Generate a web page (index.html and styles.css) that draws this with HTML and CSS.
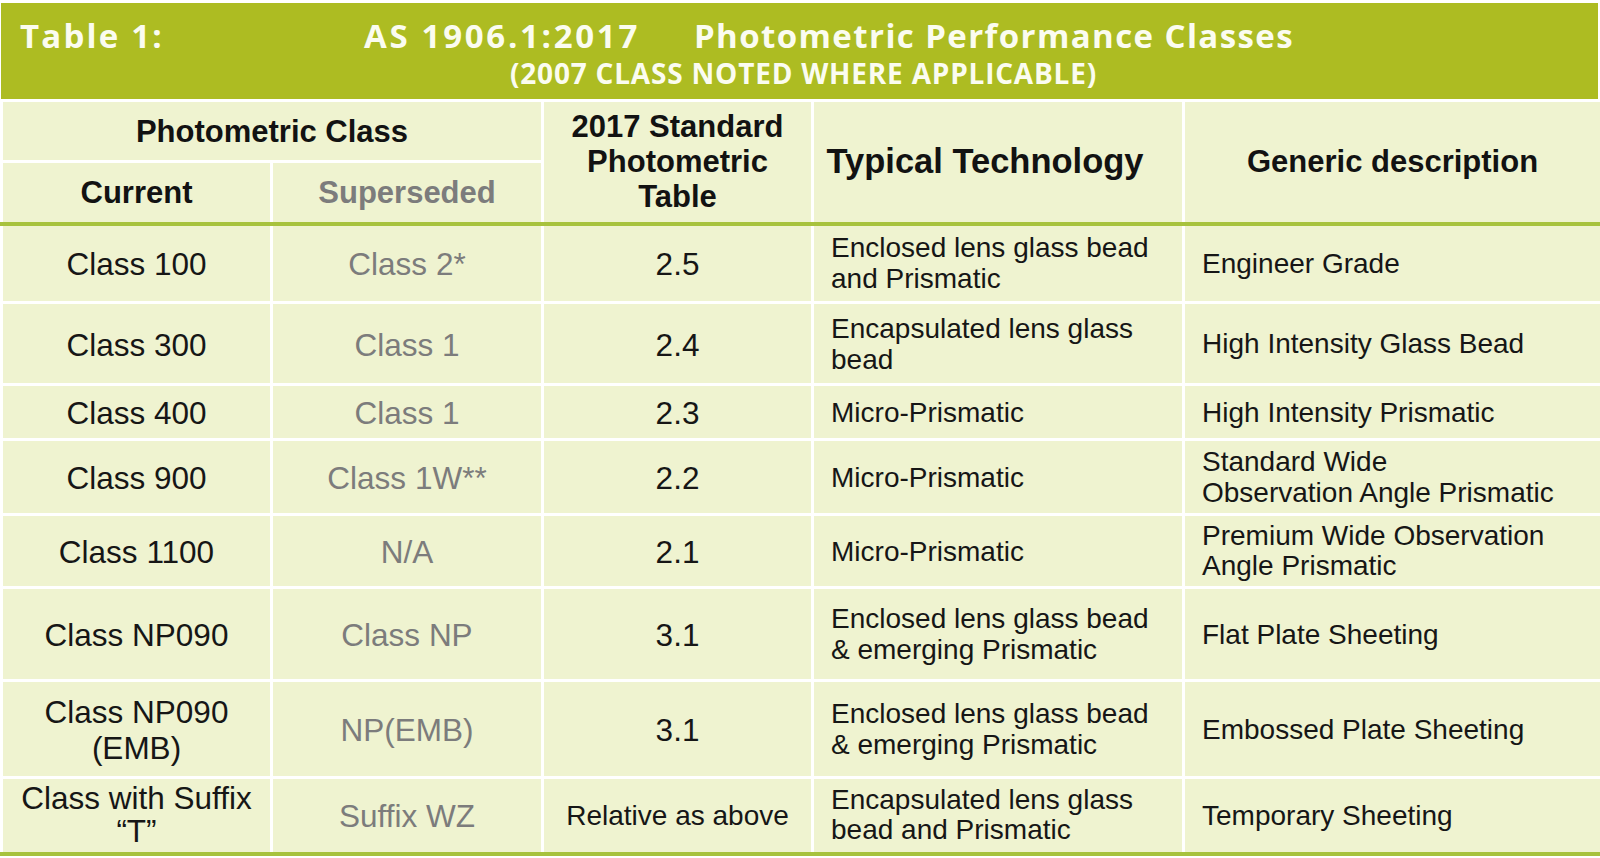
FILE: index.html
```html
<!DOCTYPE html>
<html lang="en">
<head>
<meta charset="utf-8">
<title>Table 1: AS 1906.1:2017 Photometric Performance Classes</title>
<link rel="stylesheet" href="styles.css">
</head>
<body>
<div class="sheet">
  <header class="titlebar">
    <div class="title-line">
      <span class="label">Table 1:</span>
      <span class="std">AS 1906.1:2017</span>
      <span class="name">Photometric Performance Classes</span>
    </div>
    <div class="subtitle">(2007 CLASS NOTED WHERE APPLICABLE)</div>
  </header>
  <table class="grid">
    <colgroup>
      <col class="c1"><col class="c2"><col class="c3"><col class="c4"><col class="c5">
    </colgroup>
    <thead>
      <tr class="hr1">
        <th colspan="2">Photometric Class</th>
        <th rowspan="2" class="hb">2017 Standard<br>Photometric<br>Table</th>
        <th rowspan="2" class="hb tt">Typical Technology</th>
        <th rowspan="2" class="hb">Generic description</th>
      </tr>
      <tr class="hr2">
        <th class="hb">Current</th>
        <th class="hb old">Superseded</th>
      </tr>
    </thead>
    <tbody>
      <tr class="r79">
        <td>Class 100</td><td class="old">Class 2*</td><td>2.5</td>
        <td class="tech">Enclosed lens glass bead<br>and Prismatic</td>
        <td class="desc">Engineer Grade</td>
      </tr>
      <tr class="r82">
        <td>Class 300</td><td class="old">Class 1</td><td>2.4</td>
        <td class="tech">Encapsulated lens glass<br>bead</td>
        <td class="desc">High Intensity Glass Bead</td>
      </tr>
      <tr class="r55">
        <td>Class 400</td><td class="old">Class 1</td><td>2.3</td>
        <td class="tech">Micro-Prismatic</td>
        <td class="desc">High Intensity Prismatic</td>
      </tr>
      <tr class="r75">
        <td>Class 900</td><td class="old">Class 1W**</td><td>2.2</td>
        <td class="tech">Micro-Prismatic</td>
        <td class="desc">Standard Wide<br>Observation Angle Prismatic</td>
      </tr>
      <tr class="r73">
        <td>Class 1100</td><td class="old">N/A</td><td>2.1</td>
        <td class="tech">Micro-Prismatic</td>
        <td class="desc tight">Premium Wide Observation<br>Angle Prismatic</td>
      </tr>
      <tr class="r93">
        <td>Class NP090</td><td class="old">Class NP</td><td>3.1</td>
        <td class="tech">Enclosed lens glass bead<br>&amp; emerging Prismatic</td>
        <td class="desc">Flat Plate Sheeting</td>
      </tr>
      <tr class="r97">
        <td>Class NP090<br>(EMB)</td><td class="old">NP(EMB)</td><td>3.1</td>
        <td class="tech">Enclosed lens glass bead<br>&amp; emerging Prismatic</td>
        <td class="desc">Embossed Plate Sheeting</td>
      </tr>
      <tr class="r76 last">
        <td class="suffix">Class with Suffix<br>“T”</td><td class="old">Suffix WZ</td><td class="rel">Relative as above</td>
        <td class="tech tight">Encapsulated lens glass<br>bead and Prismatic</td>
        <td class="desc">Temporary Sheeting</td>
      </tr>
    </tbody>
  </table>
</div>
</body>
</html>
```

FILE: styles.css
```css
html, body {
  margin: 0;
  padding: 0;
  background: #ffffff;
}

body {
  font-family: "Liberation Sans", Arial, sans-serif;
  color: #161616;
}

.sheet {
  width: 1600px;
  padding-top: 3px;
}

.titlebar {
  height: 96px;
  margin: 0 2px 0 1px;
  background: #adbc22;
  color: #fbfcf0;
  font-family: "Open Sans", "DejaVu Sans", sans-serif;
  font-weight: 700;
  box-sizing: border-box;
  padding-top: 15px;
}

.title-line {
  display: flex;
  align-items: baseline;
  padding-left: 19px;
  font-size: 33px;
  line-height: 36px;
}

.label {
  width: 344px;
  flex: none;
  letter-spacing: 2.2px;
}

.std {
  letter-spacing: 2.7px;
}

.name {
  margin-left: 54px;
  letter-spacing: 1.4px;
}

.subtitle {
  text-align: center;
  font-size: 28px;
  line-height: 30px;
  letter-spacing: 0.8px;
  padding-left: 8px;
  margin-top: 4px;
}

.grid {
  width: 1600px;
  table-layout: fixed;
  border-collapse: collapse;
}

.c1 { width: 270px; }
.c2 { width: 271px; }
.c3 { width: 270px; }
.c4 { width: 371px; }
.c5 { width: 418px; }

.grid th,
.grid td {
  background: #eff3d0;
  border: 3px solid #ffffff;
  padding: 0;
  text-align: center;
  vertical-align: middle;
}

.grid th {
  font-weight: bold;
  font-size: 31px;
  line-height: 35px;
  color: #121212;
}

.grid th.tt {
  font-size: 34.5px;
  padding-right: 26px;
}

.grid th.hb {
  border-bottom: 4px solid #a7c23d;
}

.hr1 { height: 61px; }
.hr2 { height: 62px; }

.grid td {
  font-size: 31.5px;
  line-height: 36px;
  padding-top: 2px;
}

.grid .old {
  color: #7c7c7c;
}

.grid td.tech,
.grid td.desc {
  text-align: left;
  font-size: 28px;
  line-height: 31px;
  padding-top: 0;
}

.grid td.tech { padding-left: 17px; }
.grid td.desc { padding-left: 17px; }

.grid td.tight { line-height: 30px; }

.grid td.rel { font-size: 28px; }
.grid td.suffix { font-size: 31.5px; line-height: 33px; padding-top: 0; }

.r79 { height: 79px; }
.r82 { height: 82px; }
.r55 { height: 55px; }
.r75 { height: 75px; }
.r73 { height: 73px; }
.r93 { height: 93px; }
.r97 { height: 97px; }
.r76 { height: 76px; }

.last td {
  border-bottom: 4px solid #a7c23d;
}
```
